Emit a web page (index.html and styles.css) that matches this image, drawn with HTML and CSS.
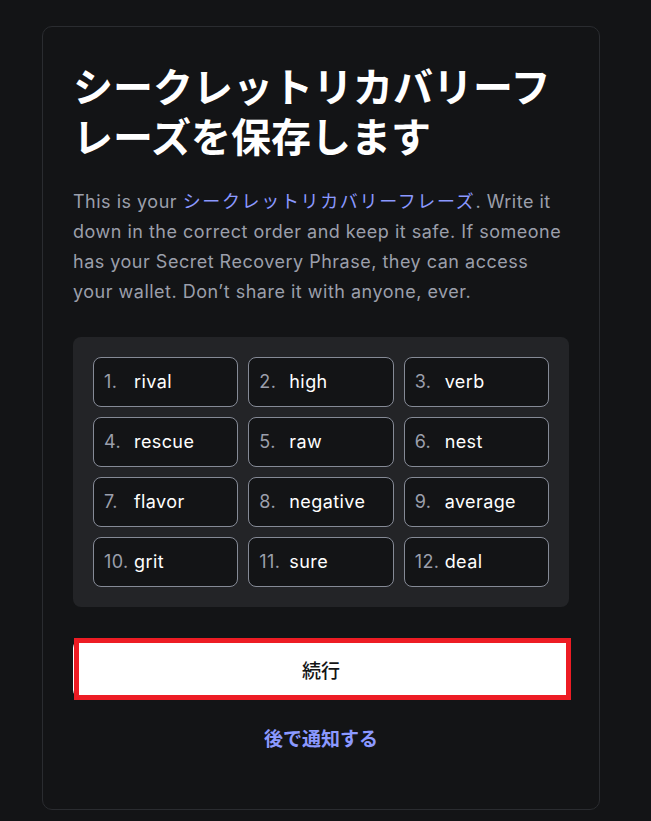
FILE: index.html
```html
<!DOCTYPE html>
<html lang="ja">
<head>
<meta charset="utf-8">
<title>シークレットリカバリーフレーズを保存します</title>
<link rel="stylesheet" href="styles.css">
</head>
<body>
<main class="card">
  <h1 class="title">シークレットリカバリーフレーズを保存します</h1>
  <p class="desc">This is your <a class="link" href="#">シークレットリカバリーフレーズ</a>. Write it down in the correct order and keep it safe. If someone has your Secret Recovery Phrase, they can access your wallet. Don’t share it with anyone, ever.</p>
  <div class="words">
    <div class="word"><span class="num">1.</span><span class="txt">rival</span></div>
    <div class="word"><span class="num">2.</span><span class="txt">high</span></div>
    <div class="word"><span class="num">3.</span><span class="txt">verb</span></div>
    <div class="word"><span class="num">4.</span><span class="txt">rescue</span></div>
    <div class="word"><span class="num">5.</span><span class="txt">raw</span></div>
    <div class="word"><span class="num">6.</span><span class="txt">nest</span></div>
    <div class="word"><span class="num">7.</span><span class="txt">flavor</span></div>
    <div class="word"><span class="num">8.</span><span class="txt">negative</span></div>
    <div class="word"><span class="num">9.</span><span class="txt">average</span></div>
    <div class="word"><span class="num">10.</span><span class="txt">grit</span></div>
    <div class="word"><span class="num">11.</span><span class="txt">sure</span></div>
    <div class="word"><span class="num">12.</span><span class="txt">deal</span></div>
  </div>
  <div class="btn-wrap">
    <button class="btn-primary" type="button">続行</button>
  </div>
  <a class="later" href="#">後で通知する</a>
</main>
</body>
</html>
```

FILE: styles.css
```css
* { box-sizing: border-box; }

html, body {
  margin: 0;
  padding: 0;
  background: #131416;
}

body {
  font-family: "Inter", "Noto Sans CJK JP", sans-serif;
  color: #ffffff;
}

.card {
  width: 558px;
  height: 784px;
  margin: 26px 0 0 42px;
  padding: 36px 30px 0 30px;
  border: 1px solid #2a2c30;
  border-radius: 10px;
  background: #131416;
  display: flex;
  flex-direction: column;
}

.title {
  margin: 0;
  font-size: 40px;
  line-height: 50px;
  font-weight: 700;
  color: #ffffff;
}

.desc {
  margin: 24px 0 0 0;
  font-size: 18px;
  line-height: 30px;
  letter-spacing: 0.5px;
  color: #9b9fab;
}

.link {
  color: #8b99ff;
  letter-spacing: 1.65px;
  text-decoration: none;
}

.words {
  margin-top: 30px;
  background: #232427;
  border-radius: 8px;
  padding: 20px;
  display: grid;
  grid-template-columns: repeat(3, 1fr);
  grid-auto-rows: 50px;
  gap: 10px;
}

.word {
  display: flex;
  align-items: center;
  border: 1px solid #858a96;
  border-radius: 8px;
  background: #131416;
  padding-left: 10px;
  font-size: 18px;
  line-height: 24px;
  letter-spacing: 0.4px;
}

.num {
  width: 30px;
  flex: none;
  color: #9b9fab;
}

.txt {
  color: #ffffff;
  font-weight: 400;
}

.btn-wrap {
  position: relative;
  margin-top: 33px;
  height: 58px;
}

.btn-primary {
  display: block;
  width: 100%;
  height: 58px;
  border: none;
  border-radius: 8px;
  background: #ffffff;
  color: #131416;
  font-family: "Inter", "Noto Sans CJK JP", sans-serif;
  font-size: 19px;
  font-weight: 500;
  cursor: pointer;
}

.btn-wrap::after {
  content: "";
  position: absolute;
  top: -2px;
  left: 1px;
  right: -2px;
  bottom: -2px;
  border: 5px solid #ed1c24;
  pointer-events: none;
}

.later {
  margin-top: 30px;
  align-self: center;
  font-size: 19px;
  line-height: 24px;
  font-weight: 600;
  color: #8b99ff;
  text-decoration: none;
}
```
